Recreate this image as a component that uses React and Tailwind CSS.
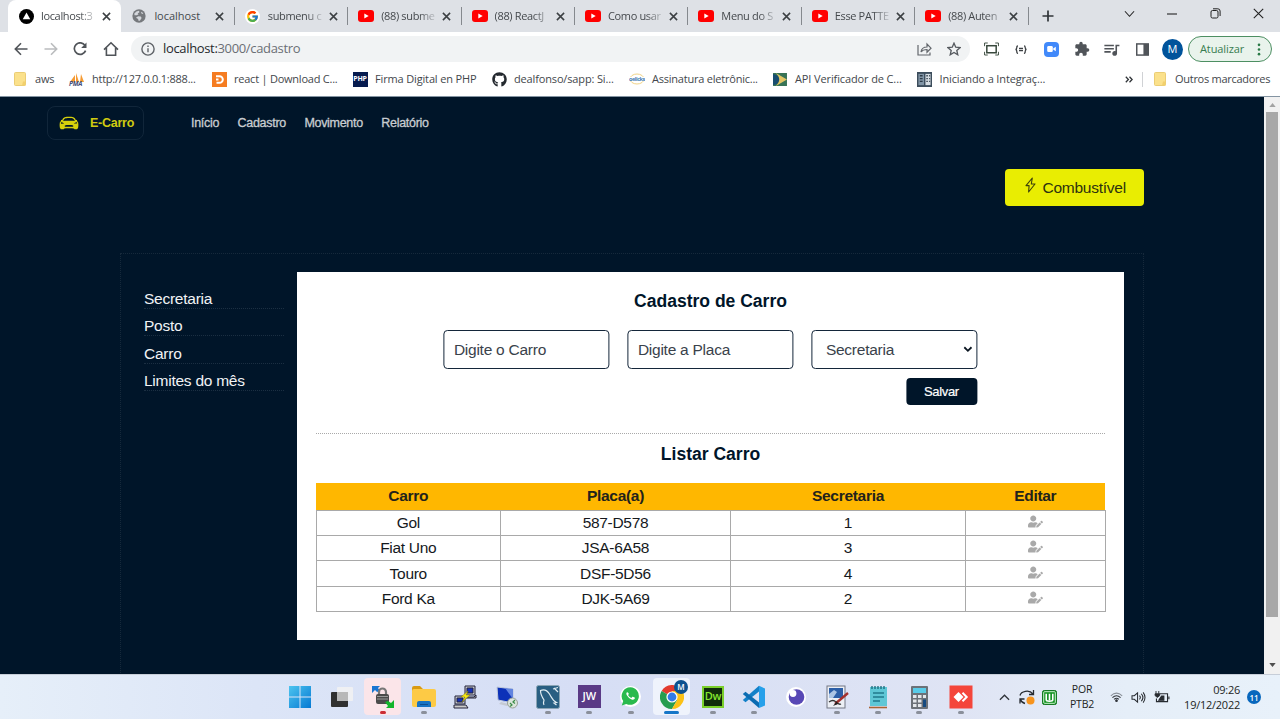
import React from "react";
import { FaUserEdit, FaGithub } from "react-icons/fa";
import { FcGoogle } from "react-icons/fc";
import { IoCarSport } from "react-icons/io5";
import { MdExtension, MdQueueMusic } from "react-icons/md";

function Close({ className = "size-[9px]" }) {
  return (
    <svg viewBox="0 0 10 10" className={className} fill="none" stroke="#3c4043" strokeWidth="1.7">
      <path d="M1 1l8 8M9 1l-8 8" />
    </svg>
  );
}

function YouTube() {
  return (
    <svg viewBox="0 0 16 12" className="h-[12px] w-[16px]">
      <rect width="16" height="12" rx="3" fill="#f00" />
      <path d="M6.3 3.4v5.2L10.7 6z" fill="#fff" />
    </svg>
  );
}

function Vercel() {
  return (
    <svg viewBox="0 0 16 16" className="size-[15px]">
      <circle cx="8" cy="8" r="8" fill="#000" />
      <path d="M8 3.8l4 7H4z" fill="#fff" />
    </svg>
  );
}

function Globe() {
  return (
    <svg viewBox="0 0 16 16" className="size-[14px]">
      <circle cx="8" cy="8" r="7.6" fill="#76797d" />
      <path d="M2.500 5.500l2.500-2.600 3-.8.500 1.500L6.500 5l1 1-2 1.200-2.500-.2zM7 8.200l3 .3 1 1.800-2 3H7.400L7 11.500 4.500 10z" fill="#d4d7dc" />
      <path d="M11 3.200l2 2-1.500.4-1.200-1.200z" fill="#d4d7dc" />
    </svg>
  );
}

const tabs = [
  { icon: <Vercel />, title: "localhost:3", active: true },
  { icon: <Globe />, title: "localhost" },
  { icon: <span className="flex size-[15px] items-center justify-center rounded-full bg-white"><FcGoogle size={13} /></span>, title: "submenu c" },
  { icon: <YouTube />, title: "(88) subme" },
  { icon: <YouTube />, title: "(88) ReactJ" },
  { icon: <YouTube />, title: "Como usar" },
  { icon: <YouTube />, title: "Menu do S" },
  { icon: <YouTube />, title: "Esse PATTE" },
  { icon: <YouTube />, title: "(88) Auten" },
];

function Tab({ icon, title, active, divider }) {
  const short = title === "localhost";
  return (
    <div
      className={
        "relative flex h-[32px] w-[113.4px] shrink-0 items-center pl-[10px] " +
        (active ? "rounded-t-[8px] bg-white" : "")
      }
    >
      {divider && <span className="absolute right-0 top-[7px] h-[18px] w-px bg-[#85898e]" />}
      <span className="flex w-[16px] shrink-0 justify-center">{icon}</span>
      <span
        className={
          "ml-[7px] w-[56px] whitespace-nowrap text-[11px] text-[#45494d] " +
          (short ? "tracking-[-0.05px]" : "tracking-[-0.35px] [mask-image:linear-gradient(to_right,black_68%,rgba(0,0,0,0.15)_98%)]")
        }
      >
        {title}
      </span>
      <span className="ml-[5px]"><Close /></span>
    </div>
  );
}

function TabStrip() {
  return (
    <div className="flex h-[32px] bg-[#dee1e6] pl-[8px]">
      {tabs.map((t, i) => (
        <Tab key={i} {...t} divider={i > 0} />
      ))}
      <svg viewBox="0 0 12 12" className="ml-[13px] mt-[10px] size-[12px] shrink-0" stroke="#303438" strokeWidth="1.7">
        <path d="M6 .5v11M.5 6h11" />
      </svg>
      <div className="ml-auto flex h-[27px] items-center pr-[16px]">
        <svg viewBox="0 0 12 8" className="mr-[32px] h-[8px] w-[11px]" fill="none" stroke="#222" strokeWidth="1.1"><path d="M1 1l5 5.5L11 1" /></svg>
        <svg viewBox="0 0 10 2" className="mr-[33px] h-[2px] w-[10px]"><path d="M0 1h10" stroke="#111" /></svg>
        <svg viewBox="0 0 11 11" className="mr-[32px] size-[11px]" fill="none" stroke="#222"><rect x="1" y="2.5" width="7" height="7.5" rx="1.5" /><path d="M3 .8h4.8a2.3 2.3 0 012.3 2.3V8" /></svg>
        <svg viewBox="0 0 11 11" className="size-[11px]" stroke="#222" strokeWidth="1.1"><path d="M.8.8l9.4 9.4M10.2.8L.8 10.2" /></svg>
      </div>
    </div>
  );
}

function Toolbar() {
  return (
    <div className="flex h-[32px] items-center bg-white pl-[14px] pr-[8px] pt-[2px]">
      <svg viewBox="0 0 14 14" className="size-[14px]" fill="none" stroke="#505459" strokeWidth="1.6"><path d="M13.5 7H1.5M7 1.2L1.3 7 7 12.8" /></svg>
      <svg viewBox="0 0 14 14" className="ml-[16px] size-[14px]" fill="none" stroke="#babcbe" strokeWidth="1.6"><path d="M.5 7h12M7 1.2L12.7 7 7 12.8" /></svg>
      <svg viewBox="0 0 14 14" className="ml-[15px] size-[14px]" fill="none" stroke="#505459" strokeWidth="1.7"><path d="M12 3.4A5.8 5.8 0 1012.6 8.6" /><path d="M13.5.5v5.4H8.2z" fill="#505459" stroke="none" /></svg>
      <svg viewBox="0 0 16 16" className="ml-[16px] size-[16px]" fill="none" stroke="#505459" strokeWidth="1.6"><path d="M1 8.6L8 1.8l7 6.8M3.4 7v7.2h9.2V7" /></svg>
      <div className="ml-[12px] flex h-[26px] w-[839px] items-center rounded-full bg-[#f1f3f4] pl-[10px] pr-[9px]">
        <svg viewBox="0 0 14 14" className="size-[14px]" fill="none" stroke="#5f6368" strokeWidth="1.4"><circle cx="7" cy="7" r="6.1" /><path d="M7 6.2v4M7 3.5V5" /></svg>
        <span className="ml-[8px] whitespace-nowrap text-[13px] tracking-[-0.34px] text-[#6b6f74]">
          <span className="text-[#26292c]">localhost:</span>3000/cadastro
        </span>
        <svg viewBox="0 0 15 14" className="ml-auto h-[14px] w-[15px]" fill="none" stroke="#63676c" strokeWidth="1.2"><path d="M1 3v10h12v-2.500M4 10c.5-3.500 2.500-5 6-5V2l4 4.200-4 4V7.500C7.500 7.500 5.500 8 4 10z" /></svg>
        <svg viewBox="0 0 16 16" className="ml-[15px] size-[14px]" fill="none" stroke="#55595e" strokeWidth="1.5"><path d="M8 1.300l2 4.600 5 .5-3.800 3.300 1.100 4.900L8 12l-4.300 2.600 1.100-4.900L1 6.400l5-.5z" /></svg>
      </div>
      <svg viewBox="0 0 16 14" className="ml-[14px] h-[14px] w-[15px]" fill="none" stroke="#39493d"><rect x="3" y="3.500" width="10" height="7.500" strokeWidth="1.6" /><path d="M.6 4V.6H4M12 .6h3.400V4M15.400 10v3.400H12M4 13.400H.6V10" /></svg>
      <svg viewBox="0 0 12 9" className="ml-[16px] h-[9px] w-[12px]" fill="none" stroke="#3c4043" strokeWidth="1.300"><path d="M3 .8Q1.800.8 1.800 2.500T.5 4.500q1.300 0 1.300 2T3 8.200M9 .8q1.200 0 1.200 1.700t1.300 2q-1.300 0-1.300 2T9 8.200M4 3.500h4M4 5.700h4" /></svg>
      <span className="ml-[17px] flex size-[15px] items-center justify-center rounded-[4px] bg-[#4189fa]">
        <svg viewBox="0 0 10 7" className="h-[6px] w-[9px]" fill="#fff"><rect width="6.500" height="7" rx="1.500" /><path d="M7 2.800L10 .8v5.400L7 4.200z" /></svg>
      </span>
      <MdExtension size={16} color="#505459" className="ml-[15px]" />
      <MdQueueMusic size={19} color="#505459" className="ml-[12px]" />
      <svg viewBox="0 0 14 14" className="ml-[15px] size-[13px]"><rect x=".8" y="1" width="12.400" height="12" fill="none" stroke="#505459" strokeWidth="1.600" /><path d="M8 1h5v12H8z" fill="#505459" /></svg>
      <span className="ml-[13px] flex size-[21px] shrink-0 items-center justify-center rounded-full bg-[#00539b] text-[11px] text-white">M</span>
      <div className="ml-auto flex h-[26px] w-[84px] shrink-0 items-center rounded-full border border-[#4d8f62] bg-[#e9f3ec] pl-[11px]">
        <span className="text-[11px] tracking-[-0.1px] text-[#377d4f]">Atualizar</span>
        <svg viewBox="0 0 4 14" className="ml-auto mr-[10px] h-[13px] w-[4px]" fill="#2a7a46"><circle cx="2" cy="2" r="1.400" /><circle cx="2" cy="7" r="1.400" /><circle cx="2" cy="12" r="1.400" /></svg>
      </div>
    </div>
  );
}

function FolderIcon() {
  return (
    <svg viewBox="0 0 12 14" className="h-[14px] w-[12px]"><rect x=".5" y=".5" width="11" height="13" rx="1" fill="#fbe18b" stroke="#ebcd74" /><path d="M9 9.500h2.500v4H8z" fill="#f2d06c" /></svg>
  );
}

function Bookmark({ icon, label, className }) {
  return (
    <div className={"flex shrink-0 items-center whitespace-nowrap text-[11px] text-[#43474b] " + className}>
      <span className="flex w-[16px] shrink-0 justify-center">{icon}</span>
      <span className="ml-[7px]">{label}</span>
    </div>
  );
}

function Bookmarks() {
  return (
    <div className="flex h-[33px] items-center border-b border-[#8494a2] bg-white pb-[2px] pl-[12px]">
      <Bookmark className="w-[57px] tracking-[-0.2px]" icon={<FolderIcon />} label="aws" />
      <Bookmark
        className="w-[142px] tracking-[-0.24px]"
        icon={
          <svg viewBox="0 0 16 15" className="h-[15px] w-[16px] overflow-visible">
            <path d="M1 10L6 3v7zM7 10V1l3 9zM11 10l1-8 3 8z" fill="#f69b32" />
            <text x="0" y="14" fontSize="6.500" fontWeight="bold" fontStyle="italic" fill="#444c78">PMA</text>
          </svg>
        }
        label="http://127.0.0.1:888..."
      />
      <Bookmark
        className="w-[141px] tracking-[-0.23px]"
        icon={
          <svg viewBox="0 0 15 15" className="size-[15px]"><rect width="15" height="15" fill="#f57c21" /><path d="M4 4.200h3.500a3.300 3.300 0 010 6.600H4.500M4 7.500h2.500" fill="none" stroke="#fff" strokeWidth="2" /></svg>
        }
        label="react | Download C..."
      />
      <Bookmark
        className="w-[139px] tracking-[-0.15px]"
        icon={<span className="flex size-[15px] items-center justify-center bg-[#061b4f] text-[7px] font-bold tracking-[-0.2px] text-white">PHP</span>}
        label="Firma Digital en PHP"
      />
      <Bookmark className="w-[138px] tracking-[-0.15px]" icon={<FaGithub size={15} color="#24292f" />} label="dealfonso/sapp: Si..." />
      <Bookmark
        className="w-[143px] tracking-[-0.22px]"
        icon={
          <svg viewBox="0 0 16 12" className="h-[12px] w-[16px]"><ellipse cx="8" cy="6" rx="7" ry="5" fill="none" stroke="#f1d386" /><rect y="4" width="16" height="4" fill="#fff" /><text x="0" y="8" fontSize="5.500" fontWeight="bold" fill="#3f7cb4" textLength="16">oelicks</text></svg>
        }
        label="Assinatura eletrônic..."
      />
      <Bookmark
        className="w-[144.500px] tracking-[-0.12px]"
        icon={
          <svg viewBox="0 0 15 14" className="h-[13px] w-[14px]"><rect width="15" height="14" fill="#377356" /><path d="M0 1c9 1 9 11 0 12z" fill="#174c70" /><path d="M3 0l12 7-12 7c5-5 5-9 0-14z" fill="#e3c565" /></svg>
        }
        label="API Verificador de C..."
      />
      <Bookmark
        className="w-[140px] tracking-[-0.15px]"
        icon={
          <svg viewBox="0 0 16 16" className="size-[15px]"><rect width="16" height="16" fill="#3c4d5c" /><path d="M1.500 2h6v12h-6z" fill="#8094a5" /><path d="M9 2h5.500v12H9z" fill="#d5dce2" /><path d="M3 4h3M3 7h3M10 4h1.500M13 4h1M10 7h1.500M13 7h1M10 10h1.500M13 10h1M3 10h3" stroke="#2c3a47" strokeWidth="1.400" /></svg>
        }
        label="Iniciando a Integraç..."
      />
      <svg viewBox="0 0 8 7" className="ml-auto h-[7px] w-[8px]" fill="none" stroke="#303438" strokeWidth="1.300"><path d="M.8.8L3.400 3.500.8 6.200M4.500.8l2.600 2.700-2.600 2.700" /></svg>
      <span className="ml-[9px] h-[15px] w-px bg-[#d0d2d5]" />
      <Bookmark className="ml-[9px] w-[128px] tracking-[-0.28px]" icon={<FolderIcon />} label="Outros marcadores" />
    </div>
  );
}

const rows = [
  ["Gol", "587-D578", "1"],
  ["Fiat Uno", "JSA-6A58", "3"],
  ["Touro", "DSF-5D56", "4"],
  ["Ford Ka", "DJK-5A69", "2"],
];

function CarTable() {
  return (
    <table className="mt-[18px] w-[789px] table-fixed border-collapse text-center text-[15.500px] tracking-[-0.3px] text-[#15191d]">
      <colgroup>
        <col className="w-[184.500px]" />
        <col className="w-[230px]" />
        <col className="w-[235px]" />
        <col className="w-[139.500px]" />
      </colgroup>
      <thead>
        <tr className="h-[27.500px] bg-[#ffb700] leading-[20px] text-[#22221c]">
          <th className="p-0">Carro</th>
          <th className="p-0">Placa(a)</th>
          <th className="p-0">Secretaria</th>
          <th className="p-0">Editar</th>
        </tr>
      </thead>
      <tbody>
        {rows.map((r) => (
          <tr key={r[0]} className="h-[25.250px] leading-[20px]">
            {r.map((c, i) => (
              <td key={i} className="border border-[#a9a9a9] p-0">{c}</td>
            ))}
            <td className="border border-[#a9a9a9] p-0">
              <FaUserEdit size={15} color="#a9a9a9" className="mx-auto -mt-[3px]" />
            </td>
          </tr>
        ))}
      </tbody>
    </table>
  );
}

function CarForm() {
  const field = "flex h-[39px] items-center rounded-[4px] border border-[#14263a] text-[15.500px] tracking-[-0.25px] text-[#3a424b] ";
  return (
    <div className="mt-[18px] w-[534px] -translate-x-[0.600px]">
      <div className="flex justify-between">
        <div className={field + "w-[166px] pl-[10px]"}>Digite o Carro</div>
        <div className={field + "w-[166px] pl-[10px]"}>Digite a Placa</div>
        <div className={field + "w-[166px] justify-between pl-[14px] pr-[4px]"}>
          Secretaria
          <svg viewBox="0 0 10 7" className="h-[7px] w-[9px]" fill="none" stroke="#0b1622" strokeWidth="2"><path d="M1 1l4 4 4-4" /></svg>
        </div>
      </div>
      <div className="ml-auto mt-[9px] flex h-[27px] w-[71px] items-center justify-center rounded-[4px] bg-[#001529] text-[13px] tracking-[-0.35px] text-white [-webkit-text-stroke:0.2px_white]">Salvar</div>
    </div>
  );
}

function Bolt() {
  return (
    <svg viewBox="0 0 11 16" className="-mt-[4px] h-[16px] w-[11px]" fill="none" stroke="#3c400c" strokeWidth="1.100" strokeLinejoin="round">
      <path d="M7.300 1L1 8.600h3.100L3.600 15 10 7H6.300z" />
    </svg>
  );
}

function Page() {
  return (
    <div className="flex h-[577px] bg-[#001529] [font-family:'Liberation_Sans',Arial,sans-serif]">
      <div className="flex h-full w-[1264px] flex-col overflow-hidden">
        <header className="flex pl-[47px] pt-[9px]">
          <div className="flex h-[34px] w-[97px] items-center rounded-[8px] border border-[#11263a] pl-[11px]">
            <IoCarSport size={20} color="#d6d10c" />
            <span className="ml-[11px] text-[12.500px] font-bold tracking-[-0.25px] text-[#d0cb10]">E-Carro</span>
          </div>
          <nav className="ml-[47px] flex items-center gap-[18.500px] text-[12.500px] tracking-[-0.3px] text-[#c9cdd1] [-webkit-text-stroke:0.3px_#c9cdd1]">
            <span>Início</span>
            <span>Cadastro</span>
            <span>Movimento</span>
            <span>Relatório</span>
          </nav>
        </header>
        <div className="ml-[1004.500px] mt-[28.500px] flex h-[37.500px] w-[139.500px] shrink-0 items-center rounded-[4px] bg-[#e9ed02] pl-[20.500px]">
          <Bolt />
          <span className="ml-[6.500px] text-[15.500px] tracking-[-0.25px] text-[#2d310f]">Combustível</span>
        </div>
        <main className="ml-[120px] mt-[47px] flex h-[430px] w-[1024px] shrink-0 items-start border border-dotted border-[#16293b] pl-[23px] pt-[18.400px]">
          <aside className="flex w-[140px] flex-col pt-[15px] text-[15.500px] tracking-[-0.25px] text-[#f1f3f5]">
            {["Secretaria", "Posto", "Carro", "Limites do mês"].map((s) => (
              <span key={s} className="mb-[5.100px] h-[22px] border-b border-dotted border-[#1b2f42] leading-[24px]">
                {s}
              </span>
            ))}
          </aside>
          <section className="ml-[13px] flex h-[368px] w-[827px] flex-col items-center bg-white pt-[18px]">
            <h2 className="text-[17.550px] font-bold leading-[22px] text-[#001529]">Cadastro de Carro</h2>
            <CarForm />
            <div className="mt-[28px] w-[789px] border-t border-dotted border-[#a9a9a9]" />
            <h2 className="mt-[8.500px] text-[17.550px] font-bold leading-[22px] text-[#001529]">Listar Carro</h2>
            <CarTable />
          </section>
        </main>
      </div>
      <div className="flex h-full w-[16px] flex-col items-center bg-[#f1f1f1]">
        <svg viewBox="0 0 8 5" className="mt-[6px] h-[4px] w-[7px] shrink-0" fill="#a3a3a3"><path d="M4 0l4 5H0z" /></svg>
        <div className="mt-[5px] h-[505px] w-[12px] shrink-0 bg-[#a8a8a8]" />
        <svg viewBox="0 0 8 5" className="mb-[7px] mt-auto h-[4px] w-[7px] shrink-0" fill="#505050"><path d="M0 0h8L4 5z" /></svg>
      </div>
    </div>
  );
}

const svg24 = { viewBox: "0 0 24 24", className: "size-[24px]" };

const apps = [
  { icon: (
    <svg {...svg24}>
      <defs><linearGradient id="win" x1="0" y1="0" x2="1" y2="1"><stop offset="0" stopColor="#4dc4ef" /><stop offset="1" stopColor="#0679d3" /></linearGradient></defs>
      <path d="M1 1h10.500v10.500H1zM12.500 1H23v10.500H12.500zM1 12.500h10.500V23H1zM12.500 12.500H23V23H12.500z" fill="url(#win)" />
    </svg>) },
  { icon: (
    <svg {...svg24}><rect x="1" y="7" width="17" height="15" rx="1" fill="#303030" /><rect x="7" y="2" width="16" height="14" rx="1" fill="#f2f2f2" fillOpacity=".85" /><path d="M7 7h11v9H7z" fill="#b8b8b8" /></svg>) },
  { mark: "red", icon: (
    <svg {...svg24}>
      <path d="M1 1h8l-2 2 2 3-3 1-2-2-3 3z" fill="#1976d2" />
      <path d="M8 11V7a3.500 3.500 0 017 0v4" fill="none" stroke="#777" strokeWidth="2.200" />
      <rect x="5" y="9" width="13" height="10" rx="2" fill="#4b4b4b" /><path d="M6 11.500h11M6 14h11" stroke="#999" />
      <path d="M23 23h-8l2-2-3-4 3-1 3 2 3-3z" fill="#12b52c" />
    </svg>) },
  { mark: "dot", icon: (
    <svg {...svg24}><path d="M0 3q0-2 2-2h6l3 3h-4l-7 3z" fill="#d99a12" /><rect y="4" width="24" height="18" rx="2" fill="#fdca45" /><path d="M5 22v-4q0-2 2-2h10q2 0 2 2v4z" fill="#1673c4" /><path d="M8 19h8v1H8z" fill="#0c4e90" /></svg>) },
  { icon: (
    <svg {...svg24}>
      <g stroke="#22223a"><path d="M12 1h10v9H12z" fill="#c4c6cd" /><path d="M14 3h6v5h-6z" fill="#1430b8" /><path d="M11 12h10l2-2v3H11z" fill="#bbb" /><path d="M2 11h10v8H2z" fill="#c4c6cd" /><path d="M4 13h6v4H4z" fill="#1430b8" /><path d="M1 20h12l2 3H1z" fill="#ccc" /></g>
      <path d="M15 6l-7 6h4l-3 5 8-7h-4z" fill="#f8ea16" stroke="#8a8000" strokeWidth=".5" />
    </svg>) },
  { icon: (
    <svg {...svg24}><path d="M2 2l16 2v14L3 15z" fill="#0c31b8" stroke="#bfc8da" /><path d="M10 3l8 1v10z" fill="#6183df" /><path d="M6 17l8 2-2 2-8-2z" fill="#c5cad3" /><circle cx="17.500" cy="18" r="5" fill="#dce5dc" stroke="#98a198" /><path d="M15 18l2 2-2 1.500M20 15l-2 2 2 1.500" fill="none" stroke="#3b8c48" strokeWidth="1.200" /></svg>) },
  { mark: "dot", icon: (
    <svg {...svg24}><rect x=".5" y=".5" width="23" height="23" rx="2" fill="#295f82" stroke="#8ba4b4" /><path d="M8 20c-1-2-.5-3.500 0-5-2-3-3.500-6-3.500-9.500C8 4 11 5 13.500 9c2 3.500 3 6.500 7 8.500l-2.500.5 2.500 2M17 4l5-1.500M18 3l4 4" fill="none" stroke="#e1edf3" strokeWidth="1.200" /></svg>) },
  { mark: "dot", icon: <span className="flex size-[23px] items-center justify-center bg-[#5a3a86] text-[11px] font-semibold text-white">JW</span> },
  { mark: "dot", icon: <span className="flex size-[21px] items-center justify-center rounded-full bg-white"><svg viewBox="0 0 24 24" className="size-[21px]"><path d="M12 1.500a10 10 0 11-4.800 19L2 22.300l1.700-5.100A10 10 0 0112 1.500z" fill="#29ba4e" /><g transform="translate(5.200 4.800) scale(.028)" fill="#fff"><path d="M145 105c-12-25-40-28-55-12-28 30-22 78 18 135s103 124 183 155c70 25 118-7 131-50 3-17 0-25-12-31l-72-35c-12-5-20-3-27 7l-25 32c-7 9-15 10-27 4-47-22-83-52-111-99-5-9-3-15 6-25 22-26 21-32 15-47z" /></g></svg></span> },
  { mark: "chrome", icon: (
    <span className="relative">
      <svg viewBox="0 0 24 24" className="mt-[1px] size-[24px]">
        <path d="M12 12L1.600 6A12 12 0 0122.400 6z" fill="#e33b2e" />
        <path d="M12 12L1.600 6A12 12 0 0012 24l5.200-9z" fill="#269d50" />
        <path d="M12 12l5.200 3L12 24A12 12 0 0022.400 6H12z" fill="#fbc116" />
        <circle cx="12" cy="12" r="5.600" fill="#fff" /><circle cx="12" cy="12" r="4.400" fill="#327be8" />
      </svg>
      <span className="absolute -top-[4px] left-[14px] flex size-[14px] items-center justify-center rounded-full bg-[#0d528f] text-[8px] font-semibold text-white">M</span>
    </span>) },
  { mark: "dot", icon: <span className="flex size-[22px] items-center justify-center border-2 border-[#7bd02b] bg-[#102c0b] text-[11px] font-semibold tracking-[-0.3px] text-[#86e72f]">Dw</span> },
  { mark: "dot", icon: (
    <svg {...svg24}>
      <path d="M17 .8L23 3.500v17L17 23z" fill="#27a0ea" />
      <path d="M17 6.500L3.500 17.200.8 15 17 .8z" fill="#1380c8" />
      <path d="M17 17.500L3.500 6.800.8 9 17 23z" fill="#0b6cb2" />
    </svg>) },
  { icon: <svg {...svg24}><circle cx="12" cy="12" r="10" fill="#fff" /><circle cx="12.500" cy="12" r="7.800" fill="#5848b5" /><circle cx="9" cy="8.500" r="3.400" fill="#fff" /></svg> },
  { mark: "dot", icon: <svg {...svg24}><rect x="2" y="1" width="18" height="22" fill="#eceff5" stroke="#737784" /><path d="M4 3h14v10H4z" fill="#2c5ea7" /><path d="M4 9l5-4 3 2-4 6H4z" fill="#acc4e4" /><path d="M4 17q4-3 7 0t5 2" fill="none" stroke="#333" strokeWidth="1.300" /><path d="M23 8L10 19" stroke="#a3302d" strokeWidth="2.400" /><path d="M12 16l-4 5 5-2z" fill="#222" /></svg> },
  { mark: "dot", icon: <svg {...svg24}><rect x="4" y="2" width="17" height="19" fill="#5ec7d6" /><path d="M3 22.500h18" stroke="#a96434" strokeWidth="1.600" /><path d="M6 1v3M9 1v3M12 1v3M15 1v3M18 1v3" stroke="#176878" strokeWidth="1.300" /><path d="M7 8h11M7 12h11M7 16h7" stroke="#207b8d" strokeWidth="1.500" /></svg> },
  { mark: "dot", icon: <svg {...svg24}><rect x="4" y="1" width="17" height="23" rx="1" fill="#6c7178" /><path d="M6 3h13v5H6z" fill="#59cbe8" /><path d="M6 10h3.500v3H6zM11 10h3.500v3H11zM16 10h3v3h-3zM6 14.500h3.500v3H6zM11 14.500h3.500v3H11zM6 19h3.500v3H6zM11 19h3.500v3H11z" fill="#e4e7eb" /><path d="M16 14.500h3V22h-3z" fill="#164a80" /></svg> },
  { mark: "dot", icon: <svg {...svg24}><path d="M.5.500h23v23H.5z" fill="#f4453a" /><path d="M4.500 12L9.500 7l5 5-5 5z" fill="#fff" /><path d="M13.500 7.800l4.200 4.200-4.200 4.200" fill="none" stroke="#fff" strokeWidth="2" /></svg> },
];

const markClass = {
  red: "h-[3px] w-[6px] bg-[#cc2d35]",
  dot: "h-[3px] w-[6px] bg-[#8a8f9a]",
  chrome: "h-[3px] w-[15px] bg-[#1676c8]",
};
const cellClass = {
  red: "bg-[#fbe5e9]",
  chrome: "bg-[#eff3fc]",
};

function Taskbar() {
  return (
    <div className="flex h-[45px] border-t border-[#c7ced8] bg-[linear-gradient(to_right,#e6eff9_0%,#dce5f7_20%,#d6def5_45%,#dfe4f4_75%,#e5eef8_88%,#e8f1fa_100%)]">
      <div className="flex pl-[279.800px]">
        {apps.map((a, i) => (
          <div key={i} className="flex w-[41.270px] justify-center pt-[3px]">
            <div className={"flex h-[37px] w-[37px] flex-col items-center rounded-[4px] pt-[6px] " + (cellClass[a.mark] || "")}>
              <div className="flex h-[25px] items-center">{a.icon}</div>
              {a.mark && <span className={"mt-[2px] rounded-full " + markClass[a.mark]} />}
            </div>
          </div>
        ))}
      </div>
      <div className="ml-auto flex items-center pr-[19px] text-[11px] leading-[15px] text-[#1c1f23]">
        <svg viewBox="0 0 12 7" className="h-[7px] w-[11px]" fill="none" stroke="#30343a" strokeWidth="1.400"><path d="M1 6l5-5 5 5" /></svg>
        <svg viewBox="0 0 16 16" className="ml-[9px] size-[16px]" fill="none" stroke="#272b30" strokeWidth="1.300"><path d="M1 6.500C2 2.500 10 0 14 5M14.500 1v4.500H10M6 14.500C4 14 2 12.500 1.500 10.500M1 14.500v-4.500h4.500" /><circle cx="11.500" cy="11.500" r="4" fill="#f7941d" stroke="none" /></svg>
        <svg viewBox="0 0 16 16" className="ml-[7px] size-[15px]"><rect x=".5" y=".5" width="15" height="15" rx="2" fill="#149323" stroke="#0b7218" /><rect x="1.800" y="1.800" width="12.400" height="12.400" rx="1" fill="none" stroke="#d5f5d6" /><path d="M4.500 4v6.500q0 1.500 3.500 1.500t3.500-1.500V4M8 4v7" fill="none" stroke="#fff" strokeWidth="1.700" /></svg>
        <div className="ml-[12px] w-[26px] text-center text-[10.500px] tracking-[-0.2px]">POR<br />PTB2</div>
        <svg viewBox="0 0 16 12" className="ml-[15px] h-[10px] w-[13px]" fill="none" stroke="#30343a" strokeWidth="1.300"><path d="M1 4.500q7-6.500 14 0" opacity=".5" /><path d="M3 6.800q5-4.600 10 0M5 9q3-2.800 6 0" /><circle cx="8" cy="10.500" r="1" fill="#30343a" /></svg>
        <svg viewBox="0 0 16 14" className="ml-[8px] h-[13px] w-[15px]" fill="none" stroke="#272b30" strokeWidth="1.100"><path d="M1 5v4h2.500L7 12V2L3.500 5zM9 5q2 2 0 4M11 3q3.500 4 0 8" /><path d="M13 1.500q4 5.500 0 11" /></svg>
        <svg viewBox="0 0 17 13" className="ml-[8px] h-[12px] w-[16px]" fill="none" stroke="#272b30" strokeWidth="1.200"><path d="M6 3h8.500v8.500h-12V8M16 6v3" /><path d="M5 10l3-4.500h2.500V10z" fill="#272b30" /><path d="M2 0v3M5 0v3M1 3h5v2L3.500 7 1 5z" fill="#272b30" strokeWidth="1" /></svg>
        <div className="ml-[14px] w-[56px] text-right text-[11px] tracking-[-0.25px]">09:26<br />19/12/2022</div>
        <span className="ml-[7px] flex size-[14px] items-center justify-center rounded-full bg-[#0767bd] text-[8px] font-semibold text-white">11</span>
      </div>
    </div>
  );
}

export default function App() {
  return (
    <div className="flex h-[719px] w-[1280px] flex-col overflow-hidden bg-white [font-family:'Open_Sans','Noto_Sans',sans-serif]">
      <TabStrip />
      <Toolbar />
      <Bookmarks />
      <Page />
      <Taskbar />
    </div>
  );
}
